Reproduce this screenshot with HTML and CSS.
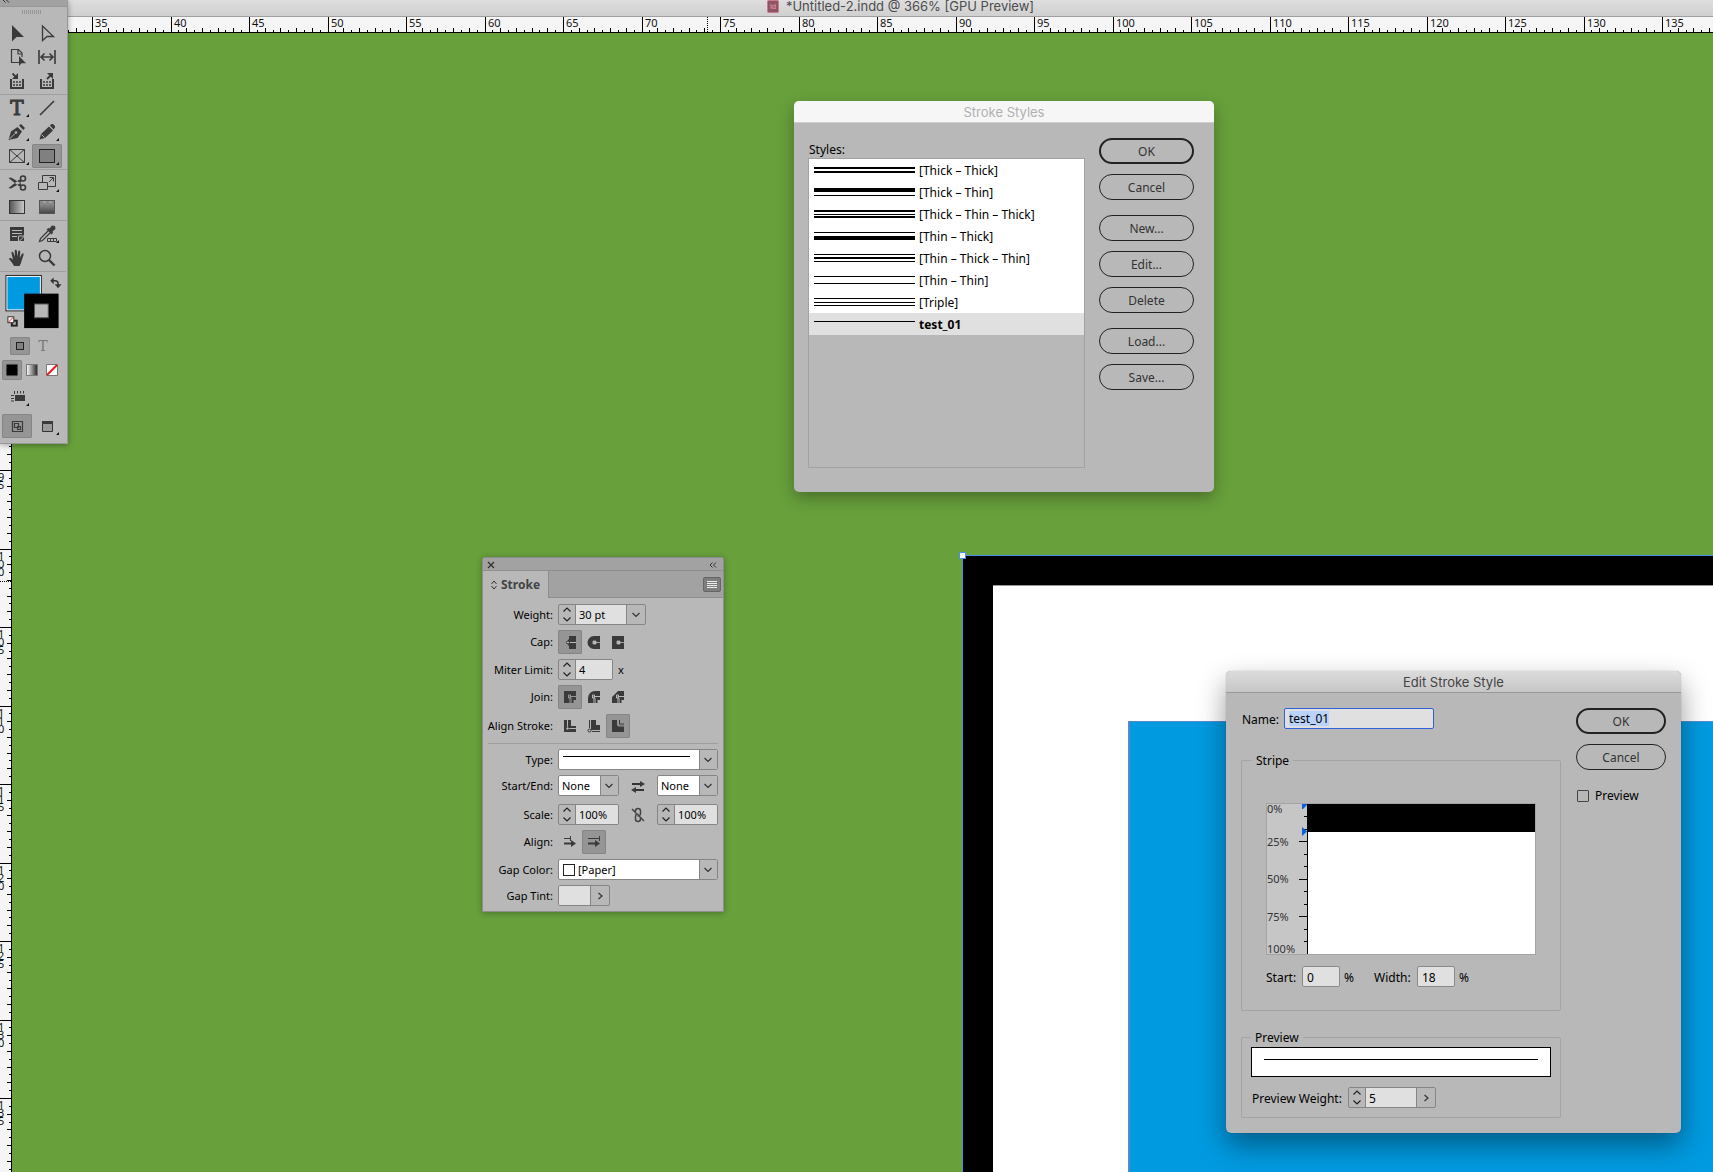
FILE: index.html
```html
<!DOCTYPE html>
<html lang="en">
<head>
<meta charset="utf-8">
<title>*Untitled-2.indd @ 366% [GPU Preview]</title>
<link rel="stylesheet" href="styles.css">
</head>
<body>
<svg class="defs" aria-hidden="true">
  <defs>
    <symbol id="chev-down" viewBox="0 0 10 10"><path d="M1.500 3l3.500 3.500L8.500 3" fill="none" stroke="#333" stroke-width="1.200"/></symbol>
    <symbol id="chev-right" viewBox="0 0 10 10"><path d="M3.500 2L7 5 3.500 8" fill="none" stroke="#333" stroke-width="1.200"/></symbol>
    <symbol id="step-up" viewBox="0 0 10 6"><path d="M1.500 4.500L5 1l3.500 3.500" fill="none" stroke="#222" stroke-width="1.200"/></symbol>
    <symbol id="step-down" viewBox="0 0 10 6"><path d="M1.500 1.500L5 5l3.500-3.500" fill="none" stroke="#222" stroke-width="1.200"/></symbol>
    <symbol id="collapse" viewBox="0 0 8 6"><path d="M3.500.5L1 3l2.500 2.500M7 .5L4.500 3 7 5.500" fill="none" stroke="#333"/></symbol>
    <linearGradient id="g-h"><stop offset="0" stop-color="#555"/><stop offset="1" stop-color="#ccc"/></linearGradient>
    <linearGradient id="g-w"><stop offset="0" stop-color="#fff"/><stop offset="1" stop-color="#222"/></linearGradient>
    <linearGradient id="g-v" x2="0" y2="1"><stop offset="0" stop-color="#aaa"/><stop offset="1" stop-color="#444"/></linearGradient>
  </defs>
</svg>

<header class="titlebar">
  <svg class="doc-icon" width="12" height="14" viewBox="0 0 12 14"><rect x=".5" y=".5" width="11" height="12" rx="1" fill="#8d5565" stroke="#c77a8b"/><text x="6" y="9" text-anchor="middle" class="doc-id">Id</text></svg>
  <h1>*Untitled-2.indd @ 366% [GPU Preview]</h1>
</header>
<svg class="ruler-h" id="ruler-h" aria-label="Horizontal ruler"></svg>

<main class="workspace">
  <svg class="ruler-v" id="ruler-v" aria-label="Vertical ruler"></svg>
  <div class="pasteboard">
    <div class="frame"><div class="paper"><div class="shape"></div></div><span class="handle"></span></div>
  </div>
</main>

<aside class="toolbox" aria-label="Tools">
  <div class="tb-head"><svg width="8" height="6"><use href="#collapse"/></svg></div>
  <div class="grip"></div>
  <div class="tools">
    <button aria-label="Selection"><svg viewBox="0 0 30 24"><path class="f" d="M10 4v16.500l4.500-4.500H22z"/></svg></button>
    <button aria-label="Direct Selection"><svg viewBox="0 0 30 24"><path class="s" d="M10.500 5v14.500l4.500-4h6.500z" stroke-width="1.300"/></svg></button>
    <button aria-label="Page"><svg viewBox="0 0 30 24"><path class="s" d="M17 17.500H9.500v-13h7l3.500 3.500v4M16 4.500V9h4" stroke-width="1.200"/><path class="f" d="M17 11v10l2.500-2.700H24z"/></svg></button>
    <button aria-label="Gap"><svg viewBox="0 0 30 24"><path class="s" d="M7 5v14M23 5v14M9 12h12M12.500 8.500L9 12l3.500 3.500M17.500 8.500L21 12l-3.500 3.500" stroke-width="1.600"/></svg></button>
    <button aria-label="Content Collector"><svg viewBox="0 0 30 24"><path class="s" d="M9 10v9h12v-9" stroke-width="2"/><path class="s" d="M11 13h8M11 16h8" stroke-dasharray="2 1" stroke-width="1.600"/><path class="s" d="M10.500 4.500l4 4" stroke-width="1.800"/><path class="f" d="M16 4v6h-6z"/></svg></button>
    <button aria-label="Content Placer"><svg viewBox="0 0 30 24"><path class="s" d="M9 10v9h12v-9" stroke-width="2"/><path class="s" d="M11 13h8M11 16h8" stroke-dasharray="2 1" stroke-width="1.600"/><path class="s" d="M15 10l4-4" stroke-width="1.800"/><path class="f" d="M21 4v6l-6-6z"/></svg></button>
  </div>
  <div class="tools">
    <button aria-label="Type"><svg viewBox="0 0 30 24"><text x="15" y="19" text-anchor="middle" class="type-t">T</text><path class="k" d="M27 18v3h-3z"/></svg></button>
    <button aria-label="Line"><svg viewBox="0 0 30 24"><path class="s" d="M8 19L22 5" stroke-width="1.600"/></svg></button>
    <button aria-label="Pen"><svg viewBox="0 0 30 24"><path class="f" d="M6.500 20L9 11.500 15.500 7l4.500 4.500-4.500 6.500zM17 5.500L19 4l4 4-1.700 2z"/><path d="M7.500 19l5.500-5.500" stroke="#b8b8b8"/><circle cx="14" cy="12.500" r="1.300" fill="#b8b8b8"/><path class="k" d="M27 18v3h-3z"/></svg></button>
    <button aria-label="Pencil"><svg viewBox="0 0 30 24"><path class="f" d="M7.500 19.500l1.500-5.500 8-7.500 4 4-8 7.500zM18 5.500L19.500 4h1.500l2 2v1.500L21.500 9.500z"/><path d="M9.500 14.500l3 3" stroke="#b8b8b8"/><path class="k" d="M27 18v3h-3z"/></svg></button>
    <button aria-label="Rectangle Frame"><svg viewBox="0 0 30 24"><path class="s" d="M7.500 5.500h15v13h-15zl15 13M22.500 5.500l-15 13"/><path class="k" d="M27 18v3h-3z"/></svg></button>
    <button class="on" aria-label="Rectangle"><svg viewBox="0 0 30 24"><rect x="7.500" y="5.500" width="15" height="13" fill="#808080" stroke="#222"/><path class="k" d="M27 18v3h-3z"/></svg></button>
  </div>
  <div class="tools">
    <button aria-label="Scissors"><svg viewBox="0 0 30 24"><path class="f" d="M6.500 7L9 6.500l9.500 5.500 1 2.500-2.500.8zM6.500 17l2.500.5 9.500-5.500 1-2.500-2.500-.8z"/><circle class="s" cx="21" cy="7.500" r="2.500" stroke-width="1.600"/><circle class="s" cx="21" cy="16.500" r="2.500" stroke-width="1.600"/></svg></button>
    <button aria-label="Free Transform"><svg viewBox="0 0 30 24"><path class="s" d="M6.500 11.500h9v7h-9zM10.500 11.500v-7h13v11h-8M17 11l4-4M17.500 6.500h4v4"/><path class="k" d="M27 18v3h-3z"/></svg></button>
    <button aria-label="Gradient Swatch"><svg viewBox="0 0 30 24"><rect x="7.500" y="5.500" width="15" height="13" fill="url(#g-h)" stroke="#333"/></svg></button>
    <button aria-label="Gradient Feather"><svg viewBox="0 0 30 24"><rect x="7.500" y="5.500" width="15" height="13" fill="url(#g-v)" stroke="#555"/><path d="M8 7.500h14M11 10.500h11" stroke="#777" stroke-width="3" stroke-dasharray="3 3" opacity=".5"/></svg></button>
  </div>
  <div class="tools">
    <button aria-label="Note"><svg viewBox="0 0 30 24"><path class="f" d="M8 5h14v9l-5 5H8z"/><path d="M10 8.500h10M10 11.500h10M10 14.500h5M16.500 19v-5h6" stroke="#b8b8b8" fill="none"/><path class="f" d="M18 19l4-4v4z"/></svg></button>
    <button aria-label="Color Theme"><svg viewBox="0 0 30 24"><path class="s" d="M16 9l-7.500 7.500-1 3 3-1L18 11" stroke-width="1.300"/><path class="f" d="M14.500 7.500l2-1.500 1 .5 2.500-3 3 .5.500 3-3 2.500.5 1.500-1.500 1.500z"/><path class="s" d="M15.500 16.500h9v3h-9zM18.500 16.500v3M21.500 16.500v3"/><path class="k" d="M27 18v3h-3z"/></svg></button>
    <button aria-label="Hand"><svg viewBox="0 0 30 24"><path class="f" d="M12 20c-1.500-3-3-4.500-5-7 .3-1.600 2-1.300 4 .8L9.500 7c0-1.500 1.600-1.600 2 0l1.500 4-.3-6c0-1.600 2-1.600 2.200 0l.5 5.800.8-5.300c.3-1.500 2-1.200 2 .3L17.800 12l2-4c.8-1.400 2.200-.6 1.800.7L19.500 15c-.4 2-1 3.500-2 5z"/></svg></button>
    <button aria-label="Zoom"><svg viewBox="0 0 30 24"><circle class="s" cx="13" cy="10" r="5.500" stroke-width="1.500"/><path class="s" d="M17 14l5.500 5.500" stroke-width="2.400"/></svg></button>
  </div>
  <svg class="swatches" width="66" height="62" viewBox="0 0 66 62" role="img" aria-label="Fill and stroke">
    <rect x="5.500" y="3.500" width="36" height="36" fill="#fff" stroke="#222"/><rect x="7" y="5" width="33" height="33" fill="#009ae0"/>
    <rect x="24" y="22" width="35" height="35" fill="#000"/><rect x="34.500" y="32.500" width="14" height="14" fill="#b8b8b8" stroke="#555"/>
    <path d="M53 9h2.500q3 0 3 3v2" fill="none" stroke="#333" stroke-width="1.500"/><path d="M54 5.500v7L50.500 9zM55 12.500h7l-3.500 4z" fill="#333"/>
    <rect x="11.500" y="49.500" width="5" height="5" fill="#b8b8b8" stroke="#222" stroke-width="2"/><rect x="7.500" y="45.500" width="6" height="6" fill="#fff" stroke="#333"/><path d="M8 51l5-5" stroke="#e22"/>
  </svg>
  <div class="fmt-row">
    <button class="on" aria-label="Formatting affects container"><svg width="18" height="18"><rect x="5.500" y="5.500" width="7" height="7" fill="#808080" stroke="#222"/></svg></button>
    <button class="fmt-text" aria-label="Formatting affects text">T</button>
  </div>
  <div class="apply-row">
    <button class="on" aria-label="Apply color"><svg width="14" height="14"><path d="M1 1h12v12H1z" stroke="#888"/></svg></button>
    <button aria-label="Apply gradient"><svg width="14" height="14"><path d="M1.500 1.500h11v11h-11z" fill="url(#g-w)" stroke="#777"/></svg></button>
    <button aria-label="Apply none"><svg width="14" height="14"><path d="M1.500 1.500h11v11h-11z" fill="#fff" stroke="#777"/><path d="M2 12L12 2" stroke="#f01818" stroke-width="2"/></svg></button>
  </div>
  <div class="tools view">
    <button aria-label="View options"><svg viewBox="0 0 30 24"><path class="f" d="M13 10h10v6H13z"/><path class="s" d="M9 10.500h3M9 13.500h3M9 16h3M12.500 6v3M15.500 6v2.500M18.500 6v2.500M21.500 6v2.500"/><path class="k" d="M27 18v3h-3z"/></svg></button>
  </div>
  <div class="tools">
    <button class="on" aria-label="Normal mode"><svg viewBox="0 0 30 24"><path class="s" d="M10.500 7.500h10v10h-10zM12.500 9.500h4v4h-4zM15.500 12.500h3v3h-3z" stroke-width="1.200"/></svg></button>
    <button aria-label="Screen mode"><svg viewBox="0 0 30 24"><path d="M10.500 7.500h10v10h-10z" fill="#999" stroke="#333"/><path class="f" d="M10 7h11v3H10z"/><path class="k" d="M27 18v3h-3z"/></svg></button>
  </div>
</aside>

<section class="dialog styles-dialog" aria-labelledby="ss-title">
  <h2 id="ss-title">Stroke Styles</h2>
  <div class="ss-body">
    <div class="ss-left">
      <span class="lbl" id="styles-lbl">Styles:</span>
      <ul class="style-list" aria-labelledby="styles-lbl">
        <li><svg width="101" height="22"><path d="M0 8h101v2H0zM0 12h101v2H0z"/></svg>[Thick – Thick]</li>
        <li><svg width="101" height="22"><path d="M0 7h101v4H0zM0 14h101v1H0z"/></svg>[Thick – Thin]</li>
        <li><svg width="101" height="22"><path d="M0 7h101v2H0zM0 11h101v1H0zM0 13h101v2H0z"/></svg>[Thick – Thin – Thick]</li>
        <li><svg width="101" height="22"><path d="M0 7h101v1H0zM0 11h101v4H0z"/></svg>[Thin – Thick]</li>
        <li><svg width="101" height="22"><path d="M0 7h101v1H0zM0 10h101v2H0zM0 14h101v1H0z"/></svg>[Thin – Thick – Thin]</li>
        <li><svg width="101" height="22"><path d="M0 7h101v1H0zM0 14h101v1H0z"/></svg>[Thin – Thin]</li>
        <li><svg width="101" height="22"><path d="M0 7h101v1H0zM0 11h101v1H0zM0 14h101v1H0z"/></svg>[Triple]</li>
        <li class="selected"><svg width="101" height="22"><path d="M0 8h101v1H0z"/></svg>test_01</li>
      </ul>
    </div>
    <div class="btn-col">
      <button class="pill primary">OK</button>
      <button class="pill">Cancel</button>
      <button class="pill group">New...</button>
      <button class="pill">Edit...</button>
      <button class="pill">Delete</button>
      <button class="pill group">Load...</button>
      <button class="pill">Save...</button>
    </div>
  </div>
</section>

<section class="panel" aria-label="Stroke panel">
  <div class="panel-head">
    <button aria-label="Close"><svg width="8" height="8"><path d="M1 1l6 6M7 1L1 7" stroke="#333" stroke-width="1.300"/></svg></button>
    <button aria-label="Collapse"><svg width="8" height="6"><use href="#collapse"/></svg></button>
  </div>
  <div class="tab-row">
    <button class="tab"><svg width="6" height="10" viewBox="0 0 6 10"><path d="M.5 4L3 1l2.500 3M.5 6L3 9l2.500-3" fill="none" stroke="#333"/></svg>Stroke</button>
    <button class="menu-btn" aria-label="Panel menu"><svg width="10" height="8"><path d="M0 .5h10M0 2.500h10M0 4.500h10M0 6.500h10" stroke="#eee"/></svg></button>
  </div>
  <div class="panel-body">
    <div class="row">
      <label for="weight">Weight:</label>
      <div class="field w88"><span class="stepper"><button aria-label="Increase"><svg><use href="#step-up"/></svg></button><button aria-label="Decrease"><svg><use href="#step-down"/></svg></button></span><input id="weight" value="30 pt"><button class="drop" aria-label="Weight presets"><svg><use href="#chev-down"/></svg></button></div>
    </div>
    <div class="row">
      <span class="name">Cap:</span>
      <div class="toggles">
        <button class="on" aria-label="Butt cap"><svg viewBox="0 0 24 24"><path class="f" d="M11 6h7v13h-7v-3.500h-1v-6h1z"/><path d="M18 12.500h-6" stroke="#b8b8b8"/><circle cx="10" cy="12.500" r="1.500" fill="#b8b8b8" stroke="#333"/></svg></button>
        <button aria-label="Round cap"><svg viewBox="0 0 24 24"><path class="f" d="M18 6h-6a6.500 6.500 0 000 13h6z"/><path d="M18 12.500h-6M11 11h3v3h-3z" stroke="#b8b8b8" fill="#b8b8b8" stroke-width=".8"/></svg></button>
        <button aria-label="Projecting cap"><svg viewBox="0 0 24 24"><path class="f" d="M6 6h12v13H6z"/><path d="M18 12.500h-6M11 11h3v3h-3z" stroke="#b8b8b8" fill="#b8b8b8" stroke-width=".8"/></svg></button>
      </div>
    </div>
    <div class="row">
      <label for="miter">Miter Limit:</label>
      <div class="field w55"><span class="stepper"><button aria-label="Increase"><svg><use href="#step-up"/></svg></button><button aria-label="Decrease"><svg><use href="#step-down"/></svg></button></span><input id="miter" value="4"></div>
      <span>x</span>
    </div>
    <div class="row">
      <span class="name">Join:</span>
      <div class="toggles">
        <button class="on" aria-label="Miter join"><svg viewBox="0 0 24 24"><path class="f" d="M6 6h12v7h-5v5H6z"/><path d="M18 11.500h-6V18M10.500 10h2v3h-2z" stroke="#999" fill="none"/><path class="f" d="M13.500 13h4.500v2h-2.500v3h-2z"/></svg></button>
        <button aria-label="Round join"><svg viewBox="0 0 24 24"><path class="f" d="M18 6h-5a7 7 0 00-7 7v5h7v-5h5z"/><path d="M18 11.500h-6V18M10.500 10h2v3h-2z" stroke="#b8b8b8" fill="none"/><path class="f" d="M13.500 13h4.500v2h-2.500v3h-2z"/></svg></button>
        <button aria-label="Bevel join"><svg viewBox="0 0 24 24"><path class="f" d="M18 6h-6l-6 6v6h7v-5h5z"/><path d="M18 11.500h-6V18M10.500 10h2v3h-2z" stroke="#b8b8b8" fill="none"/><path class="f" d="M13.500 13h4.500v2h-2.500v3h-2z"/></svg></button>
      </div>
    </div>
    <div class="row">
      <span class="name">Align Stroke:</span>
      <div class="toggles">
        <button aria-label="Align to center"><svg viewBox="0 0 24 24"><path class="f" d="M6 6h3v12H6zM10 6h3v6h5v2h-8zM6 15h12v3H6z"/><circle cx="9.500" cy="14.500" r="1.500" fill="#b8b8b8" stroke="#333" stroke-width=".6"/></svg></button>
        <button aria-label="Align to inside"><svg viewBox="0 0 24 24"><path class="f" d="M9 6h5v5h4v5H9z"/><path class="s" d="M7.500 6v8M10 17.500h8"/><circle cx="7.500" cy="16.500" r="1.500" fill="#b8b8b8" stroke="#333"/></svg></button>
        <button class="on" aria-label="Align to outside"><svg viewBox="0 0 24 24"><path class="f" d="M6 6h5v5.500h7V18H6z"/><path class="s" d="M13.500 6v4H18"/><path d="M12 6v6h6" stroke="#999" fill="none"/></svg></button>
      </div>
    </div>
    <hr>
    <div class="row">
      <label for="type">Type:</label>
      <div class="select wide type"><select id="type"><option>test_01</option></select><svg class="arr"><use href="#chev-down"/></svg></div>
    </div>
    <div class="row tall">
      <label for="start">Start/End:</label>
      <div class="select w61"><select id="start"><option>None</option></select><svg class="arr"><use href="#chev-down"/></svg></div>
      <button class="mid" aria-label="Swap arrowheads"><svg width="14" height="14"><path d="M1 5h9M13 11H4" stroke="#333" stroke-width="2"/><path d="M9 2l5 3-5 3zM5 8l-5 3 5 3z" class="f"/></svg></button>
      <div class="select w61"><select aria-label="End"><option>None</option></select><svg class="arr"><use href="#chev-down"/></svg></div>
    </div>
    <div class="row">
      <label for="scale">Scale:</label>
      <div class="field w61"><span class="stepper"><button aria-label="Increase"><svg><use href="#step-up"/></svg></button><button aria-label="Decrease"><svg><use href="#step-down"/></svg></button></span><input id="scale" value="100%"></div>
      <button class="mid" aria-label="Link scales"><svg width="14" height="16"><path d="M4.500 6V4a2.500 2.500 0 015 0v3a2 2 0 01-3 1.500M9.500 10v2a2.500 2.500 0 01-5 0V9a2 2 0 013-1.500M1 2l12 12" fill="none" stroke="#444" stroke-width="1.500"/></svg></button>
      <div class="field w61"><span class="stepper"><button aria-label="Increase"><svg><use href="#step-up"/></svg></button><button aria-label="Decrease"><svg><use href="#step-down"/></svg></button></span><input aria-label="End scale" value="100%"></div>
    </div>
    <div class="row">
      <span class="name">Align:</span>
      <div class="toggles">
        <button aria-label="Extend arrow beyond end"><svg viewBox="0 0 24 24"><path class="s" d="M6 8.500h6M12.500 6v5"/><path class="s" d="M6 13.500h8" stroke-width="2"/><path class="f" d="M13 10l5 3.500-5 3.500z"/></svg></button>
        <button class="on" aria-label="Place arrow at end"><svg viewBox="0 0 24 24"><path class="s" d="M6 8.500h12M17.500 6v5"/><path class="s" d="M6 13.500h8" stroke-width="2"/><path class="f" d="M13 10l5 3.500-5 3.500z"/></svg></button>
      </div>
    </div>
    <div class="row">
      <label for="gap">Gap Color:</label>
      <div class="select wide gap"><select id="gap"><option>[Paper]</option></select><span class="chip"></span><svg class="arr"><use href="#chev-down"/></svg></div>
    </div>
    <div class="row">
      <label for="tint">Gap Tint:</label>
      <div class="field w52"><input id="tint" value=""><button class="drop" aria-label="Tint slider"><svg><use href="#chev-right"/></svg></button></div>
    </div>
  </div>
</section>

<section class="dialog edit-dialog" aria-labelledby="es-title">
  <h2 id="es-title">Edit Stroke Style</h2>
  <div class="es-body">
    <div class="es-left">
      <div class="name-row"><label for="name">Name:</label><div class="name-box"><input id="name" value="test_01"></div></div>
      <fieldset class="stripe">
        <legend>Stripe</legend>
        <div class="chart">
          <div class="scale"><span>0%</span><span>25%</span><span>50%</span><span>75%</span><span>100%</span></div>
          <svg class="ticks" width="9" height="150"><path d="M8.500 0v150M0 37.500h8M0 75.500h8M0 112.500h8M5 12.500h3M5 25.500h3M5 50.500h3M5 62.500h3M5 87.500h3M5 100.500h3M5 125.500h3M5 137.500h3" stroke="#000"/><path d="M3 0h5v1L4 5H3zM3 23l5 4.500L3 32z" fill="#0a60e0"/></svg>
          <div class="plot"><div class="band" style="height:18%"></div></div>
        </div>
        <div class="start-row">
          <label for="s-start">Start:</label><input class="num" id="s-start" value="0"><span class="pct">%</span>
          <label class="second" for="s-width">Width:</label><input class="num" id="s-width" value="18"><span class="pct">%</span>
        </div>
      </fieldset>
      <fieldset class="preview">
        <legend>Preview</legend>
        <div class="preview-box"><div class="line"></div></div>
        <div class="pw-row">
          <label for="pw">Preview Weight:</label>
          <div class="field w88"><span class="stepper"><button aria-label="Increase"><svg><use href="#step-up"/></svg></button><button aria-label="Decrease"><svg><use href="#step-down"/></svg></button></span><input id="pw" value="5"><button class="drop" aria-label="Weight slider"><svg><use href="#chev-right"/></svg></button></div>
        </div>
      </fieldset>
    </div>
    <div class="btn-col">
      <button class="pill primary">OK</button>
      <button class="pill">Cancel</button>
      <label class="check"><input type="checkbox">Preview</label>
    </div>
  </div>
</section>
<script src="script.js"></script>
</body>
</html>
```

FILE: styles.css
```css
* { box-sizing: border-box; }
body {
  margin: 0;
  height: 100vh;
  overflow: hidden;
  display: grid;
  grid-template-rows: 17px 16px 1fr;
  grid-template-columns: minmax(0, 1fr);
  position: relative;
  font: 12px/16px "Noto Sans", "Open Sans", sans-serif;
  color: #000;
  background: #68a03c;
}
button, input, select { font: inherit; color: inherit; }
button { padding: 0; border: 0; background: none; display: grid; place-items: center; }
svg { display: block; }
.defs { position: absolute; width: 0; height: 0; }
.f { fill: #3a3a3a; }
.s { fill: none; stroke: #3a3a3a; }
.k { fill: #111; }
h1, h2 { margin: 0; font: 400 13px/16px Inter, sans-serif; }

/* Document window */
.titlebar {
  display: flex;
  justify-content: center;
  gap: 7px;
  padding-left: 88px;
  height: 17px;
  background: linear-gradient(#dedede, #d0d0d0);
  border-bottom: 1px solid #a0a0a0;
}
.titlebar h1 { color: #4c4c4c; line-height: 13px; }
.doc-id { font: 7px "Liberation Sans", sans-serif; fill: #f5a5b5; }
.ruler-h { width: 100%; height: 16px; overflow: visible; background: #f5f5f5; }
.workspace { display: grid; grid-template-columns: 12px 1fr; min-height: 0; }
.ruler-v { width: 12px; height: 100%; background: #f5f5f5; }
.ruler-h text, .ruler-v text { font: 11px "Noto Sans", sans-serif; fill: #111; }
.pasteboard { position: relative; overflow: hidden; background: #68a03c; }
.frame {
  position: absolute;
  left: 950px;
  top: 522px;
  right: 0;
  bottom: 0;
  padding: 29px 0 0 30px;
  background: #000;
  border: solid #4a90ea;
  border-width: 1px 0 0 1px;
}
.paper { height: 100%; padding: 135px 0 0 135px; background: #fff; border-top: 1px solid #999; }
.shape { height: 100%; background: #009ae0; border: solid #5b88cc; border-width: 1px 0 0 2px; }
.handle { position: absolute; left: -4px; top: -4px; width: 7px; height: 7px; background: #fff; border: 1px solid #4a90ea; }

/* Toolbox */
.toolbox {
  position: absolute;
  left: 0;
  top: 0;
  width: 68px;
  background: #b8b8b8;
  border: solid #989898;
  border-width: 0 1px 1px 0;
  padding-bottom: 5px;
  box-shadow: 0 1px 6px rgba(0, 0, 0, .35);
}
.tb-head { height: 7px; padding-left: 2px; overflow: hidden; background: #a2a2a2; border-bottom: 1px solid #969696; }
.tb-head svg { margin-top: -3px; }
.grip { width: 20px; height: 4px; margin: 3px 0 7px 22px; background: repeating-linear-gradient(90deg, #969696 0 1px, #b8b8b8 1px 2px); }
.tools { display: grid; grid-template-columns: 30px 30px; padding-left: 2px; }
.tools + .tools { border-top: 1px solid #9e9e9e; padding-top: 1px; margin-top: 1px; }
.tools button { width: 30px; height: 24px; }
.tools svg { width: 30px; height: 24px; }
.on { background: #959595; border-radius: 2px; box-shadow: inset 0 0 0 1px #858585; }
.type-t { font: 20px "DejaVu Serif", serif; fill: #3a3a3a; stroke: #3a3a3a; }
.swatches { border-top: 1px solid #9e9e9e; margin-top: 1px; }
.fmt-row { display: flex; gap: 3px; padding: 4px 0 0 10px; }
.fmt-row button { width: 20px; height: 18px; }
.fmt-row .fmt-text { color: #777; font: 14px/18px "DejaVu Serif", serif; }
.apply-row { display: flex; padding: 5px 0 5px 2px; }
.apply-row button { width: 20px; height: 20px; }
.tools.view { margin: 0; padding-top: 0; border: 0; }
.tools.view + .tools { margin: 0; padding-top: 5px; border: 0; }

/* Dialogs */
.dialog { position: absolute; background: #b8b8b8; border-radius: 5px; box-shadow: 0 12px 28px rgba(0, 0, 0, .4), 0 0 1px rgba(0, 0, 0, .4); }
.dialog h2 { height: 22px; line-height: 23px; text-align: center; border-radius: 5px 5px 0 0; }
.styles-dialog { left: 794px; top: 101px; width: 420px; box-shadow: 0 6px 16px rgba(0, 0, 0, .3); }
.styles-dialog h2 { background: #f6f6f6; color: #b0b0b0; border-bottom: 1px solid #d0d0d0; }
.ss-body { display: flex; gap: 14px; padding: 15px 20px 24px 14px; }
.ss-left { flex: 1; padding-top: 4px; }
.lbl { display: block; padding-left: 1px; }
.style-list { list-style: none; margin: 0; padding: 0; height: 310px; border: 1px solid #a2a2a2; }
.style-list li { display: flex; gap: 4px; height: 22px; line-height: 24px; padding-left: 5px; background: #fff; }
.style-list .selected { background: #e0e0e0; font-weight: 700; }
.btn-col { display: flex; flex-direction: column; gap: 10px; width: 95px; }
.pill { height: 26px; padding-top: 2px; border: 1px solid #222; border-radius: 13px; color: #333; }
.pill.primary { border-width: 2px; }
.pill.group { margin-top: 5px; }

.edit-dialog { left: 1226px; top: 671px; width: 455px; }
.edit-dialog h2 { background: linear-gradient(#dcdcdc, #c6c6c6); color: #444; border-bottom: 1px solid #999; }
.edit-dialog label { padding-top: 2px; }
.es-body { display: flex; justify-content: space-between; padding: 15px; }
.es-body .btn-col { width: 90px; }
.es-left { width: 320px; }
.name-row { display: flex; align-items: center; gap: 6px; padding-left: 1px; }
.name-row label { width: 36px; white-space: nowrap; }
.name-box { width: 150px; height: 21px; padding: 2px 4px; background: #e0e0e0; border: 1px solid #2f62d8; border-radius: 2px; display: flex; }
.name-box input { field-sizing: content; height: 15px; border: 0; padding: 1px 0 0; background: #b9d3fb; }
fieldset { margin: 0; border: 1px solid #a4a4a4; border-radius: 2px; min-width: 0; }
legend { padding: 2px 4px 0; }
.stripe { margin-top: 22px; padding: 34px 24px 24px; height: 260px; }
.stripe legend { margin-left: -14px; }
.chart { display: flex; height: 152px; border: 1px solid #a4a4a4; }
.scale { width: 32px; display: grid; grid-template-rows: 19px 37px 38px 37px 19px; align-items: center; background: #c6c6c6; font-size: 11px; line-height: 10px; color: #333; }
.scale span:first-child { align-self: start; }
.scale span:last-child { align-self: end; }
.ticks { background: #c6c6c6; flex: none; }
.plot { flex: 1; background: #fff; }
.band { box-sizing: content-box; background: #000; margin-left: -1px; border-top: 1px solid #000; }
.start-row { display: flex; align-items: center; margin-top: 11px; }
.start-row label { width: 36px; }
.start-row .second { width: 43px; margin-left: 18px; }
.pct { width: 16px; padding: 2px 0 0 4px; }
.num { width: 38px; height: 21px; padding: 2px 4px 0; border: 1px solid #8a8a8a; border-radius: 2px; background: #e0e0e0; }
.preview { margin-top: 17px; padding: 1px 9px 9px; }
.preview-box { height: 30px; padding: 11px 12px; background: #fff; border: 1px solid #000; }
.preview-box .line { height: 1px; background: #000; }
.pw-row { display: flex; align-items: center; margin-top: 10px; }
.pw-row label { width: 97px; padding-left: 1px; white-space: nowrap; }
.pw-row input { padding-top: 2px; }
.check { display: flex; align-items: center; gap: 6px; margin-top: 6px; padding-left: 1px; }
.check input { appearance: none; width: 12px; height: 12px; margin: 0; border: 1px solid #444; border-radius: 1px; }

/* Stroke panel */
.panel { position: absolute; left: 482px; top: 557px; width: 242px; background: #b8b8b8; border: 1px solid #8e8e8e; border-radius: 3px 3px 0 0; box-shadow: 0 1px 6px rgba(0, 0, 0, .3); font-size: 11px; }
.panel-head { display: flex; justify-content: space-between; align-items: center; height: 13px; padding: 1px 6px 0 4px; background: #a2a2a2; border-bottom: 1px solid #8e8e8e; }
.tab-row { display: flex; justify-content: space-between; height: 27px; background: #a2a2a2; border-bottom: 1px solid #8e8e8e; }
.tab { display: flex; align-items: center; gap: 4px; width: 66px; margin-bottom: -1px; padding: 1px 0 0 8px; background: #b8b8b8; border-right: 1px solid #8e8e8e; font-weight: 700; font-size: 12px; color: #444; }
.menu-btn { width: 18px; height: 15px; margin: 6px 2px 0 0; background: #7e7e7e; border: 1px solid #666; border-radius: 2px; }
.panel-body { display: flex; flex-direction: column; gap: 5px; padding: 6px 5px 5px; }
.row { display: flex; align-items: center; gap: 5px; }
.row.tall { height: 24px; align-items: flex-start; }
.row.tall label { line-height: 21px; }
.row > label:first-child, .row > .name { width: 65px; text-align: right; white-space: nowrap; }
.row > label:first-child, .row > .name { display: flex; justify-content: flex-end; }
hr { width: 100%; height: 1px; margin: 0; border: 0; background: #9e9e9e; }
.field, .select { display: flex; height: 21px; border: 1px solid #858585; border-radius: 2px; overflow: hidden; }
.field input { flex: 1; min-width: 0; padding: 0 3px; border: 0; background: #e0e0e0; }
.pw-row .field input { padding-top: 2px; }
.stepper { width: 17px; display: grid; grid-template-rows: 1fr 1fr; border-right: 1px solid #858585; }
.stepper svg { width: 10px; height: 6px; }
.drop { width: 19px; border-left: 1px solid #858585; }
.drop svg, .arr { width: 10px; height: 10px; }
.w88 { width: 88px; }
.w61 { width: 61px; }
.w55 { width: 55px; }
.w52 { width: 52px; }
.wide { width: 160px; }
.toggles { display: flex; }
.toggles button, .toggles svg { width: 24px; height: 24px; }
.mid { width: 28px; height: 21px; }
.select { position: relative; background: #fff; }
.select select { appearance: none; width: 100%; padding: 0 22px 0 3px; border: 0; background: linear-gradient(90deg, #858585 1px, #b8b8b8 1px) right / 18px 100% no-repeat; }
.select .arr { position: absolute; right: 4px; top: 5px; pointer-events: none; }
.type select { color: transparent; background: linear-gradient(90deg, #858585 1px, #b8b8b8 1px) right / 18px 100% no-repeat, linear-gradient(#000, #000) 4px 6px / 127px 1px no-repeat; }
.gap select { padding-left: 19px; }
.chip { position: absolute; left: 4px; top: 4px; width: 12px; height: 12px; border: 1px solid #222; background: #fff; pointer-events: none; }
```

FILE: script.js
```js
// Draws both document rulers: a tick every half unit, a label every five units.
const UNIT = 15.7;
const NS = "http://www.w3.org/2000/svg";

function add(svg, tag, attrs, text) {
  const el = document.createElementNS(NS, tag);
  for (const k in attrs) el.setAttribute(k, attrs[k]);
  if (text) el.textContent = text;
  svg.append(el);
}

function drawRuler(svg, horizontal, origin, originValue, cursor) {
  const box = svg.getBoundingClientRect();
  const length = horizontal ? box.width : box.height;
  const depth = horizontal ? 16 : 12;
  const rect = (pos, size) => add(svg, "rect", horizontal
    ? { x: pos, y: depth - size, width: 1, height: size }
    : { x: depth - size, y: pos, width: size, height: 1 });

  // Ticks before this point lie under the toolbox.
  const first = horizontal ? 60 : 400;
  for (let half = Math.ceil((first - origin) / UNIT) * 2; ; half++) {
    const pos = Math.round(origin + half * UNIT / 2);
    if (pos > length) break;
    const value = originValue + half / 2;
    const major = value % 5 === 0;
    rect(pos, major ? depth : half % 2 ? 3 : 5);
    if (!major) continue;
    if (horizontal) add(svg, "text", { x: pos + 3, y: 10 }, String(value));
    else [...String(value)].forEach((d, i) => add(svg, "text", { x: -2, y: pos + 11 + i * 8 }, d));
  }
  add(svg, "rect", horizontal
    ? { x: 0, y: depth - 1, width: length, height: 1 }
    : { x: depth - 1, y: 0, width: 1, height: length });
  add(svg, "path", {
    d: horizontal ? `M${cursor + 0.5} 0V${depth}` : `M0 ${cursor + 0.5}H${depth}`,
    stroke: "#000", "stroke-dasharray": "1 1"
  });
}

function drawAll() {
  const h = document.getElementById("ruler-h");
  const v = document.getElementById("ruler-v");
  h.replaceChildren();
  v.replaceChildren();
  drawRuler(h, true, 92, 35, 707);
  drawRuler(v, false, 437, 95, 548);
}

drawAll();
window.addEventListener("resize", drawAll);
```
